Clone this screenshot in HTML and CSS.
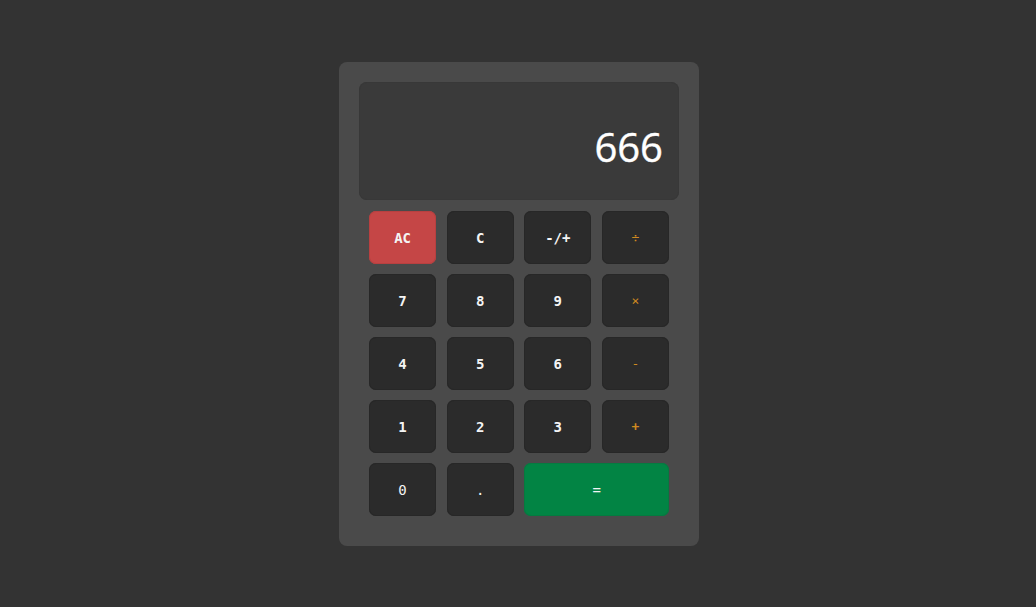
FILE: index.html
```html
<!DOCTYPE html>
<html>
<head>
<meta charset="utf-8">
<link rel="stylesheet" href="styles.css">
</head>
<body>
<div class="calc">
  <div class="display"><span class="value">666</span></div>
  <div class="keys">
    <button class="key key-ac">AC</button>
    <button class="key">C</button>
    <button class="key">-/+</button>
    <button class="key key-op">÷</button>
    <button class="key">7</button>
    <button class="key">8</button>
    <button class="key">9</button>
    <button class="key key-op">×</button>
    <button class="key">4</button>
    <button class="key">5</button>
    <button class="key">6</button>
    <button class="key key-op">-</button>
    <button class="key">1</button>
    <button class="key">2</button>
    <button class="key">3</button>
    <button class="key key-op key-plus">+</button>
    <button class="key thin">0</button>
    <button class="key thin">.</button>
    <button class="key key-eq thin">=</button>
  </div>
</div>
</body>
</html>
```
FILE: styles.css
```css
html, body {
  margin: 0;
  padding: 0;
  height: 100%;
}
body {
  background: #333333;
  display: flex;
  justify-content: center;
  align-items: flex-start;
  padding-left: 2px;
  box-sizing: border-box;
  font-family: "Open Sans", "DejaVu Sans", sans-serif;
}
.calc {
  margin-top: 62px;
  width: 360px;
  box-sizing: border-box;
  background: #4a4a4a;
  border-radius: 8px;
  padding: 20px 20px 30px 20px;
  display: flex;
  flex-direction: column;
  gap: 11px;
}
.display {
  height: 118px;
  box-sizing: border-box;
  background: #3a3a3a;
  border-radius: 8px;
  box-shadow: inset 0 0 0 1px #383838;
  display: flex;
  justify-content: flex-end;
  align-items: flex-end;
  padding: 0 16px 33px 16px;
}
.value {
  color: #ffffff;
  font-size: 40px;
  line-height: 40px;
  font-weight: 400;
  -webkit-text-stroke: 0.4px #ffffff;
}
.keys {
  margin: 0 10px;
  display: grid;
  grid-template-columns: repeat(4, 1fr);
  grid-auto-rows: 53px;
  column-gap: 10.5px;
  row-gap: 10px;
}
.key {
  border: none;
  margin: 0;
  padding: 0;
  background: #2b2b2b;
  box-shadow: inset 0 0 0 1px #272727;
  border-radius: 7px;
  color: #f4f4f4;
  font-family: "DejaVu Sans Mono", monospace;
  font-weight: 700;
  font-size: 14px;
  display: flex;
  align-items: center;
  justify-content: center;
}
.key.thin {
  font-weight: 400;
}
.key-ac {
  background: #c54646;
  box-shadow: inset 0 0 0 1px #b84040;
}
.key-op {
  color: #d08a20;
  font-weight: 400;
  font-size: 13px;
}
.key-plus {
  font-weight: 700;
}
.key-eq {
  grid-column: span 2;
  background: #028444;
  box-shadow: inset 0 0 0 1px #067a40;
}
```
